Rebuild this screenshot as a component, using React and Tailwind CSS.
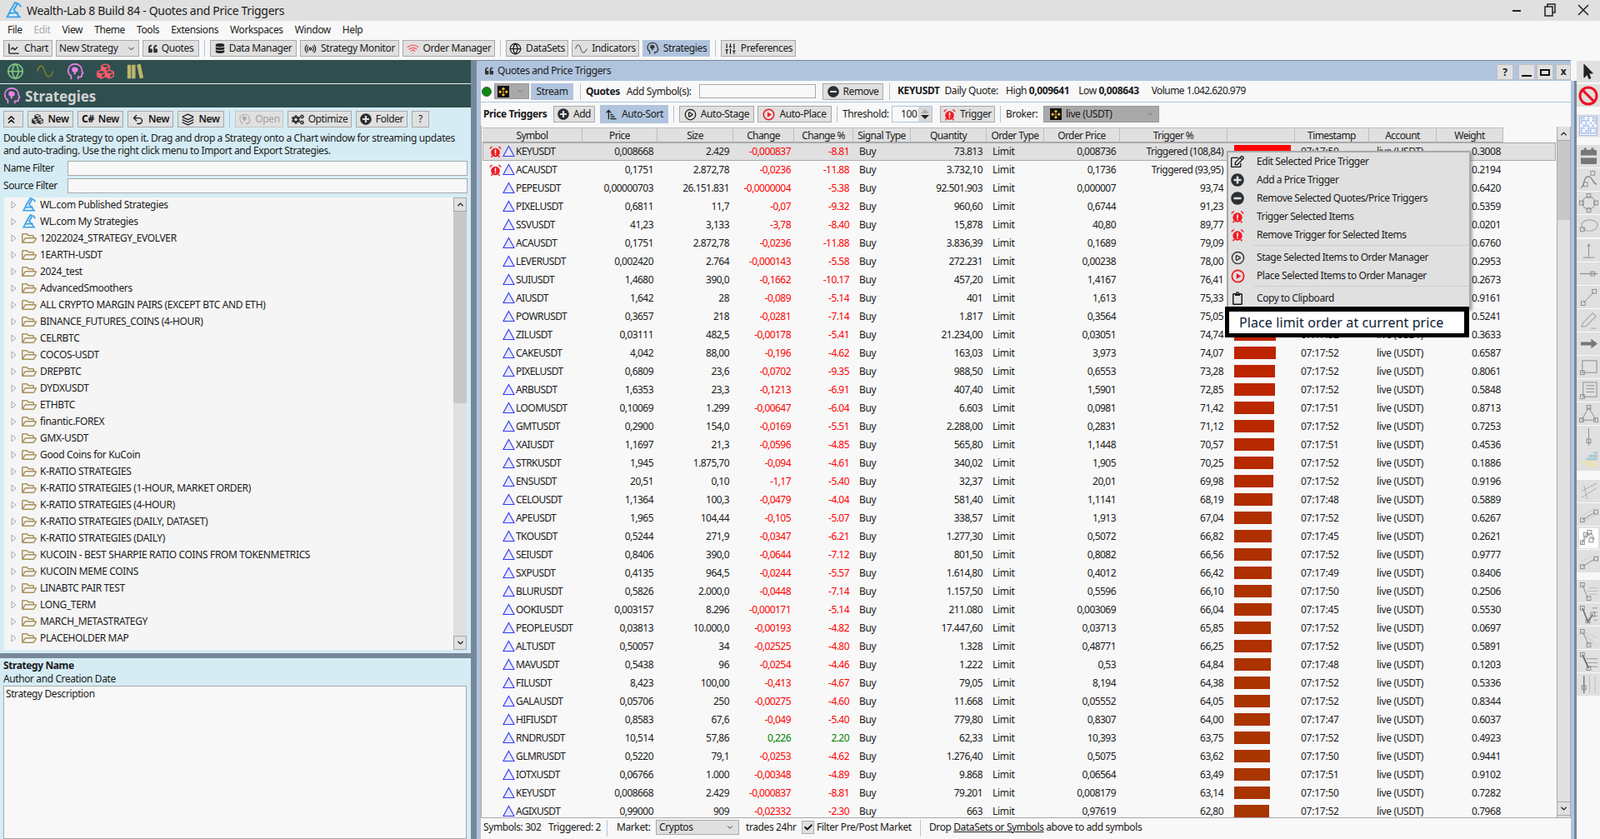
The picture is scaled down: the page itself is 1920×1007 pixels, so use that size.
import React from "react";
import { FaQuoteLeft, FaDatabase, FaCubes, FaCogs, FaPlusCircle, FaMinusCircle, FaMousePointer, FaCheck, FaRegEdit, FaRegClipboard, FaRegFolderOpen } from "react-icons/fa";
import { ChevronDown, ChevronUp, ChevronsUp, Globe, Radio, Wifi, ChartLine, SlidersVertical, Undo2, Layers, CirclePlay, Ban, ArrowUpNarrowWide } from "lucide-react";

const Wave = ({ s = 16, c = "#333", w = 1.5 }) => (
  <svg width={s} height={s} viewBox="0 0 24 24" fill="none" stroke={c} strokeWidth={w}><path d="M1 12c3-10 7-10 10 0s7 10 12 0" /></svg>
);
const Head = ({ s = 16, c = "#333", w = 1.8 }) => (
  <svg width={s} height={s} viewBox="0 0 24 24" fill="none" stroke={c} strokeWidth={w}>
    <path d="M7 22v-4.500C4.500 16 3 13.500 3 10.500 3 5.500 7 2 12 2s9 3.500 9 8.500c0 1 .8 2 1.500 3.500l-1.500.8V17a2 2 0 0 1-2 2h-3v3" />
    <path d="M8 8.500a3 3 0 0 1 5-2 3 3 0 0 1 3 3 3 3 0 0 1-3 3v3h-2.500v-3A3 3 0 0 1 8 8.500z" fill={c} stroke="none" />
  </svg>
);
const Logo = ({ s = 17 }) => (
  <svg width={s} height={s} viewBox="0 0 24 24" fill="none" stroke="#3aa0e6" strokeWidth={2.2}>
    <path d="M14 1l3 2-5 8 8 10H3l5-10z" fill="#d8eefb" />
    <path d="M6 16l12-1" /><path d="M18 2l4 5" />
  </svg>
);
const Binance = ({ s = 14 }) => (
  <svg width={s} height={s} viewBox="0 0 24 24"><rect width="24" height="24" fill="#111" />
    <path d="M12 3l3.500 3.500L12 10 8.500 6.500zM5.500 9 9 12.500 5.500 16 2 12.500zM18.500 9l3.500 3.500L18.500 16 15 12.500zM12 15l3.500 3.500L12 22l-3.500-3.500zM12 10.500l2 2-2 2-2-2z" fill="#f3ba2f" /></svg>
);
const Alarm = ({ s = 16 }) => (
  <svg width={s} height={s} viewBox="0 0 24 24">
    <circle cx="12" cy="13.500" r="8.500" fill="#f01b24" />
    <path d="M1.500 7 6 2.500a4 4 0 0 0-4.500 4.500zM22.500 7 18 2.500a4 4 0 0 1 4.500 4.500z" fill="#f01b24" stroke="#f01b24" />
    <path d="M6 20l-2 3M18 20l2 3" stroke="#f01b24" strokeWidth="2.500" />
    <rect x="10.800" y="8" width="2.400" height="7" fill="#fff" /><rect x="10.800" y="16.200" width="2.400" height="2.400" fill="#fff" />
  </svg>
);
const Tri = () => (
  <svg width="15" height="15" viewBox="0 0 15 15"><path d="M7.500 1.500 14 13.500H1z" fill="#e8e8ff" stroke="#2f3cf0" strokeWidth="1.100" /></svg>
);
const PlayRed = ({ s = 17 }) => (
  <svg width={s} height={s} viewBox="0 0 24 24"><circle cx="12" cy="12" r="10" fill="none" stroke="#f01b24" strokeWidth="2.500" /><path d="M9.500 7l8 5-8 5z" fill="#f01b24" /></svg>
);
const Folder = () => <FaRegFolderOpen size={18} color="#a8915a" />;
const Arrow = () => (
  <svg width="7" height="10" viewBox="0 0 7 10" fill="none" stroke="#a8a8a8" className="ml-[13px]"><path d="M1 1l5 4-5 4z" /></svg>
);
const Sep = ({ c = "" }) => <div className={`w-px h-[20px] bg-[#b0c4de] shrink-0 ${c}`} />;

const Btn = ({ w, icon, children, active, disabled, bold, h = "h-[20px]", c = "" }) => (
  <div className={`${w} ${h} ${c} shrink-0 flex items-center justify-center gap-[5px] border border-[#a9a9a9] whitespace-nowrap ${active ? "bg-[#b0c4de] border-[#b0c4de]" : "bg-[#e0e0e0]"} ${disabled ? "text-[#a0a0a0] border-[#c8c8c8]" : ""} ${bold ? "font-semibold" : ""}`}>
    {icon}<span>{children}</span>
  </div>
);

const menuTop = ["File", "Edit", "View", "Theme", "Tools", "Extensions", "Workspaces", "Window", "Help"];

const tree = ["12022024_STRATEGY_EVOLVER", "1EARTH-USDT", "2024_test", "AdvancedSmoothers", "ALL CRYPTO MARGIN PAIRS (EXCEPT BTC AND ETH)", "BINANCE_FUTURES_COINS (4-HOUR)", "CELRBTC", "COCOS-USDT", "DREPBTC", "DYDXUSDT", "ETHBTC", "finantic.FOREX", "GMX-USDT", "Good Coins for KuCoin", "K-RATIO STRATEGIES", "K-RATIO STRATEGIES (1-HOUR, MARKET ORDER)", "K-RATIO STRATEGIES (4-HOUR)", "K-RATIO STRATEGIES (DAILY, DATASET)", "K-RATIO STRATEGIES (DAILY)", "KUCOIN - BEST SHARPIE RATIO COINS FROM TOKENMETRICS", "KUCOIN MEME COINS", "LINABTC PAIR TEST", "LONG_TERM", "MARCH_METASTRATEGY", "PLACEHOLDER MAP"];

const rows = `KEYUSDT|0,008668|2.429|-0,000837|-8.81|73.813|0,008736|Triggered (108,84)|07:17:50|0.3008
ACAUSDT|0,1751|2.872,78|-0,0236|-11.88|3.732,10|0,1736|Triggered (93,95)|07:17:50|0.2194
PEPEUSDT|0,00000703|26.151.831|-0,0000004|-5.38|92.501.903|0,000007|93,74|07:17:52|0.6420
PIXELUSDT|0,6811|11,7|-0,07|-9.32|960,60|0,6744|91,23|07:17:52|0.5359
SSVUSDT|41,23|3,133|-3,78|-8.40|15,878|40,80|89,77|07:17:52|0.0201
ACAUSDT|0,1751|2.872,78|-0,0236|-11.88|3.836,39|0,1689|79,09|07:17:50|0.6760
LEVERUSDT|0,002420|2.764|-0,000143|-5.58|272.231|0,00238|78,00|07:17:52|0.2953
SUIUSDT|1,4680|390,0|-0,1662|-10.17|457,20|1,4167|76,41|07:17:52|0.2673
AIUSDT|1,642|28|-0,089|-5.14|401|1,613|75,33|07:17:52|0.9161
POWRUSDT|0,3657|218|-0,0281|-7.14|1.817|0,3564|75,05|07:17:52|0.5241
ZILUSDT|0,03111|482,5|-0,00178|-5.41|21.234,00|0,03051|74,74|07:17:52|0.3633
CAKEUSDT|4,042|88,00|-0,196|-4.62|163,03|3,973|74,07|07:17:52|0.6587
PIXELUSDT|0,6809|23,6|-0,0702|-9.35|988,50|0,6553|73,28|07:17:52|0.8061
ARBUSDT|1,6353|23,3|-0,1213|-6.91|407,40|1,5901|72,85|07:17:52|0.5848
LOOMUSDT|0,10069|1.299|-0,00647|-6.04|6.603|0,0981|71,42|07:17:51|0.8713
GMTUSDT|0,2900|154,0|-0,0169|-5.51|2.288,00|0,2831|71,12|07:17:52|0.7253
XAIUSDT|1,1697|21,3|-0,0596|-4.85|565,80|1,1448|70,57|07:17:51|0.4536
STRKUSDT|1,945|1.875,70|-0,094|-4.61|340,02|1,905|70,25|07:17:52|0.1886
ENSUSDT|20,51|0,10|-1,17|-5.40|32,37|20,01|69,98|07:17:52|0.9196
CELOUSDT|1,1364|100,3|-0,0479|-4.04|581,40|1,1141|68,19|07:17:48|0.5889
APEUSDT|1,965|104,44|-0,105|-5.07|338,57|1,913|67,04|07:17:52|0.6267
TKOUSDT|0,5244|271,9|-0,0347|-6.21|1.277,30|0,5072|66,82|07:17:45|0.2621
SEIUSDT|0,8406|390,0|-0,0644|-7.12|801,50|0,8082|66,56|07:17:52|0.9777
SXPUSDT|0,4135|964,5|-0,0244|-5.57|1.614,80|0,4012|66,42|07:17:49|0.8406
BLURUSDT|0,5826|2.000,0|-0,0448|-7.14|1.157,50|0,5596|66,10|07:17:50|0.2506
OOKIUSDT|0,003157|8.296|-0,000171|-5.14|211.080|0,003069|66,04|07:17:45|0.5530
PEOPLEUSDT|0,03813|10.000,0|-0,00193|-4.82|17.447,60|0,03713|65,85|07:17:52|0.0697
ALTUSDT|0,50057|34|-0,02525|-4.80|1.328|0,48771|66,25|07:17:52|0.5891
MAVUSDT|0,5438|96|-0,0254|-4.46|1.222|0,53|64,84|07:17:48|0.1203
FILUSDT|8,423|100,00|-0,413|-4.67|79,05|8,194|64,38|07:17:52|0.5336
GALAUSDT|0,05706|250|-0,00275|-4.60|11.668|0,05552|64,05|07:17:52|0.8344
HIFIUSDT|0,8583|67,6|-0,049|-5.40|779,80|0,8307|64,00|07:17:47|0.6037
RNDRUSDT|10,514|57,86|0,226|2.20|62,33|10,393|63,75|07:17:52|0.4923
GLMRUSDT|0,5220|79,1|-0,0253|-4.62|1.276,40|0,5075|63,62|07:17:50|0.9441
IOTXUSDT|0,06766|1.000|-0,00348|-4.89|9.868|0,06564|63,49|07:17:51|0.9102
KEYUSDT|0,008668|2.429|-0,000837|-8.81|79.201|0,008179|63,14|07:17:50|0.7282
AGIXUSDT|0,99000|909|-0,02332|-2.30|663|0,97619|62,80|07:17:52|0.7968`.split("\n").map((l) => l.split("|"));

const cols = "grid grid-cols-[120px_90px_91px_73px_71px_69px_91px_69px_91px_129px_81px_89px_81px_80px]";
const heads = ["Symbol", "Price", "Size", "Change", "Change %", "Signal Type", "Quantity", "Order Type", "Order Price", "Trigger %", "", "Timestamp", "Account", "Weight"];

const Row = ({ r, i }) => {
  const trig = parseFloat(r[7].replace(",", "."));
  const done = r[7].startsWith("Trig");
  const pos = !r[3].startsWith("-");
  const color = pos ? "text-[#008000]" : "text-[#ff0000]";
  const d = 74 - trig;
  const bar = done ? { width: 68, background: "#ff0000" } : { width: Math.round(trig * 0.675), background: `rgb(${Math.round(190 - d * 2)},${Math.round(36 + d * 1.6)},0)` };
  return (
    <div className={`${cols} h-[22px] w-[1288px] items-center relative tracking-[-0.55px] ${i === 0 ? "bg-[#e0e0e0] outline outline-[1px] outline-[#a9a9a9] -outline-offset-1" : ""}`}>
      <div className="flex items-center pl-[8px] whitespace-nowrap">
        <span className="w-[15px] flex justify-center">{done && <Alarm />}</span>
        <span className="ml-[1px]"><Tri /></span>
        <span className="ml-[1px]">{r[0]}</span>
      </div>
      <div className="text-right pr-[5px]">{r[1]}</div>
      <div className="text-right pr-[5px]">{r[2]}</div>
      <div className={`text-right pr-[4px] ${color}`}>{r[3]}</div>
      <div className={`text-right pr-[5px] ${color}`}>{r[4]}</div>
      <div className="pl-[7px] tracking-[-0.3px]">Buy</div>
      <div className="text-right pr-[5px]">{r[5]}</div>
      <div className="pl-[7px] tracking-[-0.3px]">Limit</div>
      <div className="text-right pr-[5px]">{r[6]}</div>
      <div className="text-right pr-[5px] whitespace-nowrap">{r[7]}</div>
      <div className="pl-[8px]"><div className="h-[15px]" style={bar} /></div>
      <div className="pl-[7px] tracking-[-0.25px]">{r[8]}</div>
      <div className="pl-[9px] tracking-[-0.35px]">live (USDT)</div>
      <div className="pl-[42px] tracking-[-0.45px]">{r[9]}</div>
    </div>
  );
};

const G = "#8a8a8a";
const sq = (x, y) => <rect x={x - 2.500} y={y - 2.500} width="5" height="5" fill="none" stroke={G} />;
const gridCells = [
  "1101011", "1111011", "1010101", "0111010", "1101111", "1011101", "1111111",
];
const tools = [
  { t: 174, el: <><rect x="2" y="4" width="20" height="18" rx="2" fill="#777" /><rect x="2" y="11" width="20" height="3" fill="#e0e0e0" /><rect x="6" y="1.500" width="3" height="4" fill="#777" /><rect x="15" y="1.500" width="3" height="4" fill="#777" /></> },
  { t: 202, el: <><path d="M2 22c5 0 3-14 9-14s5 8 11 10" stroke={G} strokeWidth="1.500" />{sq(8, 18)}{sq(17, 4)}</> },
  { t: 230, el: <><circle cx="12" cy="12" r="8" stroke={G} />{sq(12, 3)}{sq(3, 12)}{sq(21, 12)}{sq(12, 21)}</> },
  { t: 258, el: <><ellipse cx="13" cy="11" rx="10" ry="7" stroke="#aaa" strokeWidth="1.200" />{sq(4, 16)}</> },
  { t: 287, el: <path d="M12 4v16M5 21h14M10 7l2-3 2 3" stroke={G} /> },
  { t: 315, el: <><path d="M1 12h22" stroke={G} strokeWidth="1.200" />{sq(17, 12)}</> },
  { t: 343, el: <><path d="M6 19 18 6" stroke={G} />{sq(5, 20)}{sq(19, 5)}</> },
  { t: 371, el: <path d="M3 20l2-5L17 3l4 4L9 19zM15 22h6" stroke="#aaa" strokeWidth="1.200" /> },
  { t: 399, el: <path d="M2 10h13V6l8 6-8 6v-4H2z" fill="#777" /> },
  { t: 427, el: <><rect x="4" y="4" width="18" height="15" stroke={G} />{sq(4, 19)}</> },
  { t: 455, el: <><rect x="5" y="2" width="17" height="18" stroke={G} /><path d="M9 6h10M9 10h10M9 14h10" stroke={G} />{sq(4, 20)}</> },
  { t: 483, el: <><path d="M12 4 3 20h18z" stroke={G} />{sq(12, 4)}{sq(3, 20)}{sq(21, 20)}</> },
  { t: 511, el: <><path d="M12 1v22" stroke={G} />{sq(12, 17)}</> },
  { t: 538, el: <><path d="M18 2h5v3h-5zM12 6h11v3H12zM9 10h14v3H9z" fill="#a7c9cf" /><path d="M3 14h20v3H3zM8 18h15v3H8z" fill="#eee2ad" /></> },
  { t: 576, el: <path d="M3 20 22 8M6 5 10 22M3 12l19-10" stroke="#aaa" /> },
  { t: 604, el: <><path d="M3 14 20 4M3 22 22 12" stroke="#ccc" /><path d="M4 19 20 9" stroke={G} />{sq(4, 19)}{sq(21, 9)}</> },
  { t: 632, white: true, el: <><path d="M3 20 8 8l7-2 4 8-8-6-8 12z" stroke="#999" />{sq(4, 18)}{sq(8, 8)}{sq(13, 5)}{sq(15, 15)}</> },
  { t: 660, el: <><path d="M4 19 20 9" stroke={G} /><path d="M3 13 16 5" stroke="#ccc" />{sq(4, 19)}{sq(21, 9)}</> },
  { t: 696, el: <><path d="M4 4l7 17" stroke={G} /><path d="M12 8h11M10 12h13M12 16h11" stroke="#bbb" />{sq(4, 4)}{sq(12, 21)}</> },
  { t: 724, el: <><path d="M4 4l7 17 6-9" stroke="#666" strokeWidth="1.500" /><path d="M16 4h7M18 9h5M18 14h5M18 19h5" stroke="#999" />{sq(4, 4)}{sq(11, 20)}{sq(17, 12)}</> },
  { t: 752, el: <><path d="M4 4l8 17" stroke={G} /><path d="M4 4l19 8M4 4l19 18M4 4l15 18" stroke="#ccc" />{sq(4, 4)}{sq(12, 21)}</> },
  { t: 780, el: <><path d="M4 4l8 17" stroke="#555" strokeWidth="1.500" /><path d="M8 9h15M10 14h13M12 19h11" stroke="#999" />{sq(4, 4)}{sq(12, 21)}</> },
  { t: 808, el: <><path d="M6 1v22" stroke="#777" strokeWidth="1.500" /><path d="M13 1v22M20 1v22" stroke="#bbb" />{sq(6, 16)}</> },
];

const Menu = () => (
  <div className="absolute left-[1472px] top-[181px] w-[293px] h-[190px] bg-[#e0e0e0] border-2 border-[#a9a9a9] shadow-[2px_2px_3px_rgba(0,0,0,0.3)] tracking-[-0.45px]">
    {[
      [194, <FaRegEdit size={16} />, "Edit Selected Price Trigger"],
      [216, <FaPlusCircle size={16} color="#2b2f33" />, "Add a Price Trigger"],
      [238, <FaMinusCircle size={16} color="#2b2f33" />, "Remove Selected Quotes/Price Triggers"],
      [260, <Alarm s={16} />, "Trigger Selected Items"],
      [282, <Alarm s={16} />, "Remove Trigger for Selected Items"],
      [309, <CirclePlay size={17} strokeWidth={2} color="#333" />, "Stage Selected Items to Order Manager"],
      [331, <PlayRed />, "Place Selected Items to Order Manager"],
      [358, <FaRegClipboard size={16} />, "Copy to Clipboard"],
    ].map(([y, ic, t]) => (
      <div key={t} className="absolute left-0 right-0 h-[22px] flex items-center" style={{ top: y - 183 - 11 }}>
        <span className="w-[20px] ml-[1px] flex justify-center">{ic}</span>
        <span className="ml-[13px]">{t}</span>
      </div>
    ))}
    <div className="absolute left-[30px] right-0 top-[111px] h-px bg-[#cfcfcf]" />
    <div className="absolute left-[30px] right-0 top-[160px] h-px bg-[#cfcfcf]" />
  </div>
);

export default function App() {
  return (
    <div className="relative w-[1920px] h-[1007px] overflow-hidden bg-[#f8f8f8] text-[#1a1a1a] text-[12px] tracking-[-0.4px] font-['Open_Sans',sans-serif]">
      {/* title */}
      <div className="h-[25px] bg-[#e0e0e0] flex items-center relative">
        <span className="ml-[6px]"><Logo s={21} /></span>
        <span className="ml-[5px] text-[14px] tracking-[-0.32px]">Wealth-Lab 8 Build 84 - Quotes and Price Triggers</span>
        <div className="absolute left-[1815px] top-[12px] w-[10px] h-[2px] bg-[#222]" />
        <svg className="absolute left-[1853px] top-[4px]" width="15" height="16" viewBox="0 0 15 16" fill="none" stroke="#222" strokeWidth="1.500"><rect x="1" y="4" width="9" height="11" /><path d="M4 4V1h9v10h-3" /></svg>
        <svg className="absolute left-[1893px] top-[5px]" width="14" height="14" viewBox="0 0 14 14" stroke="#222" strokeWidth="1.500"><path d="M1 1l12 12M13 1 1 13" /></svg>
      </div>
      {/* menu */}
      <div className="h-[21px] flex items-center pl-[9px] gap-[14px]">
        {menuTop.map((m) => <span key={m} className={m === "Edit" ? "text-[#a8a8a8]" : ""}>{m}</span>)}
      </div>
      {/* toolbar */}
      <div className="h-[26px] flex items-start pt-[2px] pl-[4px] gap-[4px]">
        <Btn w="w-[59px]" icon={<ChartLine size={15} strokeWidth={2.200} />}>Chart</Btn>
        <div className="w-[100px] h-[20px] bg-[#e0e0e0] border border-[#a9a9a9] flex items-center justify-between pl-[3px] pr-[3px]"><span>New Strategy</span><ChevronDown size={11} /></div>
        <Btn w="w-[68px]" icon={<FaQuoteLeft size={11} color="#333" />}>Quotes</Btn>
        <Sep c="mx-[2px]" />
        <Btn w="w-[104px]" icon={<FaDatabase size={12} color="#222" />}>Data Manager</Btn>
        <Btn w="w-[119px]" icon={<Radio size={15} />}>Strategy Monitor</Btn>
        <Btn w="w-[111px]" icon={<Wifi size={15} color="#ff5566" />}>Order Manager</Btn>
        <Sep c="mx-[2px]" />
        <Btn w="w-[75px]" icon={<Globe size={15} />}>DataSets</Btn>
        <Btn w="w-[81px]" icon={<Wave s={15} />}>Indicators</Btn>
        <Btn w="w-[81px]" active icon={<Head s={16} />}>Strategies</Btn>
        <Sep c="mx-[2px]" />
        <Btn w="w-[90px]" icon={<SlidersVertical size={15} />}>Preferences</Btn>
      </div>

      <div className="flex h-[935px]">
        {/* left */}
        <div className="w-[565px] shrink-0 flex flex-col">
          <div className="h-[28px] bg-[#2f4f4f] flex items-center pl-[7px] gap-[14px]">
            <span className="w-[22px] flex justify-center"><Globe size={21} color="#7fc47f" /></span>
            <span className="w-[22px] flex justify-center"><Wave s={21} c="#7f7f2f" w={1.800} /></span>
            <span className="w-[22px] flex justify-center"><Head s={22} c="#ee82ee" /></span>
            <span className="w-[22px] flex justify-center"><FaCubes size={21} color="#ff5a68" /></span>
            <span className="w-[22px] flex justify-center"><svg width="21" height="21" viewBox="0 0 24 24" fill="#bdb76b"><path d="M1 3h5v19H1zM7 3h5v19H7zM14 3l5-1 4 19-5 1z" /></svg></span>
          </div>
          <div className="h-px bg-[#eeeeee]" />
          <div className="h-[28px] bg-[#2f4f4f] flex items-center pl-[3px] pt-[1px] gap-[5px] text-[#d3d3d3] text-[17px] font-bold tracking-[-0.1px]">
            <Head s={22} c="#ee82ee" /><span>Strategies</span>
          </div>
          <div className="h-[656px] bg-[#d5ecf5] flex flex-col pl-[4px]">
            <div className="h-[28px] flex items-center gap-[5px] pt-[1px]">
              <Btn w="w-[24px]" icon={<ChevronsUp size={15} strokeWidth={2.500} />} />
              <Btn w="w-[55px]" bold icon={<FaCubes size={14} color="#333" />}>New</Btn>
              <Btn w="w-[55px]" bold icon={<span className="font-extrabold">C#</span>}>New</Btn>
              <Btn w="w-[55px]" bold icon={<Undo2 size={15} strokeWidth={2.200} />}>New</Btn>
              <Btn w="w-[56px]" bold icon={<Layers size={15} />}>New</Btn>
              <Sep c="mx-[1px]" />
              <Btn w="w-[58px]" disabled icon={<Head s={15} c="#a8a8a8" />}>Open</Btn>
              <Btn w="w-[77px]" icon={<FaCogs size={15} color="#333" />}>Optimize</Btn>
              <Btn w="w-[62px]" icon={<FaPlusCircle size={14} color="#2b2f33" />}>Folder</Btn>
              <Btn w="w-[21px]">?</Btn>
            </div>
            <div className="leading-[15px] mt-[1.500px] whitespace-nowrap">
              Double click a Strategy to open it. Drag and drop a Strategy onto a Chart window for streaming updates<br />
              and auto-trading. Use the right click menu to Import and Export Strategies.
            </div>
            <div className="flex items-center h-[18px] mt-[5px]"><span className="w-[77px]">Name Filter</span><div className="w-[480px] h-[18px] bg-[#f8f8f8] border border-[#a9a9a9]" /></div>
            <div className="flex items-center h-[18px] mt-[3px]"><span className="w-[77px]">Source Filter</span><div className="w-[480px] h-[18px] bg-[#f8f8f8] border border-[#a9a9a9]" /></div>
            <div className="relative w-[555px] h-[543px] mt-[5px] ml-[1px] bg-[#f5f5f5] overflow-hidden tracking-[-0.35px]">
              <div className="-mt-[1px]">
                {["WL.com Published Strategies", "WL.com My Strategies"].map((t) => (
                  <div key={t} className="h-[20px] flex items-center whitespace-nowrap -ml-[5px]">
                    <Arrow /><span className="ml-[4px] w-[22px] flex justify-center"><Logo s={18} /></span><span className="ml-[2px]">{t}</span>
                  </div>
                ))}
                {tree.map((t) => (
                  <div key={t} className="h-[20px] flex items-center whitespace-nowrap -ml-[5px]">
                    <Arrow /><span className="ml-[4px] w-[22px] flex justify-center"><Folder /></span><span className="ml-[2px]">{t}</span>
                  </div>
                ))}
              </div>
              <div className="absolute right-0 top-0 bottom-0 w-[16px] bg-[#e0e0e0] flex flex-col">
                <div className="h-[17px] border border-[#a9a9a9] flex items-center justify-center"><ChevronUp size={11} strokeWidth={3} /></div>
                <div className="h-[230px] bg-[#c8c8c8]" />
                <div className="flex-1" />
                <div className="h-[17px] border border-[#a9a9a9] flex items-center justify-center"><ChevronDown size={11} strokeWidth={3} /></div>
              </div>
            </div>
          </div>
          <div className="h-[6px] bg-[#778899]" />
          <div className="flex-1 bg-[#d5ecf5] pl-[4px]">
            <div className="font-bold pt-[1px] leading-[16px] tracking-[-0.4px]">Strategy Name</div>
            <div className="leading-[15px]">Author and Creation Date</div>
            <div className="w-[556px] h-[184px] mt-[1px] bg-[#f8f8f8] border border-[#a9a9a9] pl-[2px]">Strategy Description</div>
          </div>
        </div>
        <div className="w-[7px] bg-[#778899] shrink-0" />
        {/* window */}
        <div className="w-[1320px] shrink-0 flex flex-col relative">
          <div className="h-[25px] bg-[#b0c4de] relative flex items-center pl-[10px] gap-[5px] border-t border-[#778899] w-[1313px]">
            <FaQuoteLeft size={10} color="#333" /><span>Quotes and Price Triggers</span>
            <div className="absolute left-[1224px] top-[4px] w-[20px] h-[19px] bg-[#e0e0e0] border border-[#c0c0c0] flex items-center justify-center font-bold">?</div>
            <div className="absolute left-[1250px] top-[4px] w-[20px] h-[19px] bg-[#e0e0e0] border border-[#c0c0c0] flex items-end justify-center pb-[3px]"><div className="w-[12px] h-[2px] bg-[#111]" /></div>
            <div className="absolute left-[1272px] top-[4px] w-[20px] h-[19px] bg-[#e0e0e0] border border-[#c0c0c0] flex items-center justify-center"><div className="w-[12px] h-[8px] border-2 border-[#111]" /></div>
            <div className="absolute left-[1295px] top-[4px] w-[18px] h-[19px] bg-[#e0e0e0] border border-[#c0c0c0] flex items-center justify-center font-bold pb-[2px]">x</div>
          </div>
          <div className="flex w-[1320px] flex-1">
            <div className="w-[5px] bg-[#b0c4de] shrink-0" />
            <div className="w-[1308px] shrink-0 flex flex-col">
              {/* quote row */}
              <div className="h-[25px] flex items-center whitespace-nowrap">
                <div className="w-[12px] h-[12px] rounded-full bg-[#0a8a0a] border border-[#555] ml-[1px]" />
                <div className="w-[42px] h-[19px] ml-[3px] bg-[#a9a9a9] border border-[#999] flex items-center pl-[3px] gap-[9px]"><Binance s={14} /><ChevronDown size={9} color="#666" /></div>
                <div className="w-[51px] h-[20px] ml-[2px] bg-[#b0c4de] flex items-center justify-center">Stream</div>
                <Sep c="ml-[8px]" />
                <span className="ml-[6px] font-bold">Quotes</span>
                <span className="ml-[8px]">Add Symbol(s):</span>
                <div className="absolute left-[267px] top-[29px] w-[140px] h-[17px] bg-[#f8f8f8] border border-[#a9a9a9]" />
                <Btn w="w-[73px]" c="absolute left-[415px] top-[28px]" icon={<FaMinusCircle size={14} color="#2b2f33" />}>Remove</Btn>
                <div className="absolute left-[495px] top-[28px] w-px h-[20px] bg-[#b0c4de]" />
                <div className="absolute left-[505px] top-[27px] h-[20px] flex items-center">
                  <span className="font-bold">KEYUSDT</span>
                  <span className="ml-[6px]">Daily Quote:</span>
                  <span className="ml-[9px]">High <b>0,009641</b></span>
                  <span className="ml-[11px]">Low <b>0,008643</b></span>
                  <span className="ml-[15px] tracking-[-0.55px]">Volume 1.042.620.979</span>
                </div>
              </div>
              <div className="h-px bg-[#b0c4de]" />
              {/* triggers row */}
              <div className="relative h-[28px] whitespace-nowrap">
                <span className="absolute left-[3px] top-[5px] font-bold">Price Triggers</span>
                <Btn w="w-[50px]" c="absolute left-[87px] top-[4px]" icon={<FaPlusCircle size={14} color="#2b2f33" />}>Add</Btn>
                <Btn w="w-[82px]" c="absolute left-[143px] top-[3px]" h="h-[22px]" active icon={<ArrowUpNarrowWide size={15} />}>Auto-Sort</Btn>
                <div className="absolute left-[231px] top-[4px] w-px h-[20px] bg-[#b0c4de]" />
                <Btn w="w-[90px]" c="absolute left-[238px] top-[4px]" icon={<CirclePlay size={15} />}>Auto-Stage</Btn>
                <Btn w="w-[89px]" c="absolute left-[332px] top-[4px]" icon={<PlayRed s={15} />}>Auto-Place</Btn>
                <div className="absolute left-[427px] top-[4px] w-px h-[20px] bg-[#b0c4de]" />
                <span className="absolute left-[434px] top-[5px]">Threshold:</span>
                <div className="absolute left-[493px] top-[4px] w-[49px] h-[20px] bg-[#f8f8f8] border border-[#b0c4de] flex items-center pl-[10px]">100
                  <div className="absolute right-0 top-0 bottom-0 w-[16px] bg-[#d8d8d8] flex flex-col items-center justify-center gap-[2px]">
                    <div className="w-0 h-0 border-x-[5px] border-x-transparent border-b-[5px] border-b-[#aaa]" />
                    <div className="w-0 h-0 border-x-[5px] border-x-transparent border-t-[5px] border-t-[#222]" />
                  </div>
                </div>
                <Btn w="w-[66px]" c="absolute left-[551px] top-[4px]" icon={<Alarm s={15} />}>Trigger</Btn>
                <div className="absolute left-[623px] top-[4px] w-px h-[20px] bg-[#b0c4de]" />
                <span className="absolute left-[630px] top-[5px]">Broker:</span>
                <div className="absolute left-[675px] top-[4px] w-[139px] h-[20px] bg-[#a9a9a9] border border-[#999] flex items-center pl-[7px] gap-[5px]"><Binance s={14} /><span>live (USDT)</span><ChevronDown size={10} color="#666" className="absolute right-[5px]" /></div>
              </div>
              {/* table */}
              <div className="relative h-[831px] border-l border-b border-[#a9a9a9] overflow-hidden">
                <div className="absolute left-[1px] top-[1.500px] w-[1288px]">
                  <div className={`${cols} h-[18px] bg-[#e0e0e0] w-[1225px] border-b border-[#a9a9a9] tracking-[-0.6px]`}>
                    {heads.map((h, i) => <div key={i} className="flex items-center justify-center border-r border-[#bdbdbd] border-t whitespace-nowrap">{h}</div>)}
                  </div>
                  {rows.map((r, i) => <Row key={i} r={r} i={i} />)}
                </div>
                <div className="absolute left-[1290px] top-[1px] bottom-0 w-[17px] bg-[#e0e0e0] flex flex-col border-x border-[#a9a9a9]">
                  <div className="h-[17px] flex items-center justify-center border-b border-[#a9a9a9]"><ChevronUp size={11} strokeWidth={3} /></div>
                  <div className="h-[95px] bg-[#c8c8c8]" />
                  <div className="flex-1" />
                  <div className="h-[17px] mb-[2px] flex items-center justify-center border-y border-[#a9a9a9]"><ChevronDown size={11} strokeWidth={3} /></div>
                </div>
              </div>
              {/* status */}
              <div className="relative flex-1 bg-[#f8f8f8] whitespace-nowrap">
                <span className="absolute left-[3px] top-[2px]">Symbols: 302</span>
                <span className="absolute left-[81px] top-[2px]">Triggered: 2</span>
                <div className="absolute left-[151px] top-[2px] w-px h-[20px] bg-[#b0c4de]" />
                <span className="absolute left-[163px] top-[2px]">Market:</span>
                <div className="absolute left-[210px] top-[2px] w-[100px] h-[18px] bg-[#e0e0e0] border border-[#a9a9a9] flex items-center pl-[3px]">Cryptos<ChevronDown size={10} className="absolute right-[5px]" /></div>
                <span className="absolute left-[318px] top-[2px]">trades 24hr</span>
                <div className="absolute left-[385px] top-[3px] w-[15px] h-[16px] bg-[#e0e0e0] border border-[#a9a9a9] flex items-center justify-center"><FaCheck size={10} color="#111" /></div>
                <span className="absolute left-[403px] top-[2px]">Filter Pre/Post Market</span>
                <div className="absolute left-[527px] top-[2px] w-px h-[20px] bg-[#b0c4de]" />
                <span className="absolute left-[538px] top-[2px]">Drop <u>DataSets or Symbols</u> above to add symbols</span>
              </div>
            </div>
            <div className="w-[4px] bg-[#b0c4de] shrink-0" />
            <div className="w-[3px] bg-[#778899] shrink-0" />
          </div>
        </div>
      </div>

      {/* right toolbar */}
      <div className="absolute left-[1892px] top-[72px] w-[28px] h-[935px]">
        <div className="absolute top-[1px] w-[28px] h-[26px] bg-[#e0e0e0] flex items-center justify-center"><FaMousePointer size={18} color="#222" /></div>
        <div className="absolute top-[29px] w-[28px] h-[27px] bg-[#e0e0e0] flex items-center justify-center"><Ban size={24} color="#ee1122" strokeWidth={3} /></div>
        <div className="absolute top-[65px] w-[28px] h-[28px] bg-[#e6e6e6] flex items-center justify-center">
          <svg width="22" height="24" viewBox="0 0 22 24"><rect x=".5" y=".5" width="21" height="23" fill="#fff" stroke="#a9b9e6" />
            {gridCells.map((row, y) => row.split("").map((v, x) => v === "1" ? <rect key={`${x}-${y}`} x={1.500 + x * 2.800} y={1.500 + y * 3} width="2.400" height="2.600" fill="#b4c6ec" /> : null))}
          </svg>
        </div>
        {tools.map((t) => (
          <div key={t.t} className="absolute left-0 w-[28px] h-[27px] bg-[#e0e0e0] flex items-center justify-center" style={{ top: t.t - 72 }}>
            <div className={t.white ? "bg-white w-[23px] h-[24px] flex items-center justify-center" : ""}>
              <svg width="23" height="23" viewBox="0 0 24 24" fill="none">{t.el}</svg>
            </div>
          </div>
        ))}
      </div>

      <Menu />
      <div className="absolute left-[1470px] top-[368px] w-[293px] h-[37px] bg-white border-t-[6px] border-b-[5px] border-l-[5px] border-r-[6px] border-black flex items-center pl-[12px] text-[16px] tracking-[0.1px] text-[#0b1a33] whitespace-nowrap">Place limit order at current price</div>
    </div>
  );
}
